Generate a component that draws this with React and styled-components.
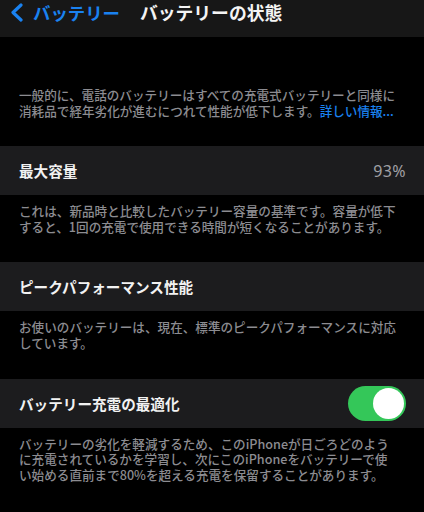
import React, { useState } from 'react';
import styled, { createGlobalStyle } from 'styled-components';

const GlobalStyle = createGlobalStyle`
    html, body {
        margin: 0;
        padding: 0;
        background: #000;
    }
    body {
        font-family: "Noto Sans CJK JP", "Noto Sans", sans-serif;
        -webkit-font-smoothing: antialiased;
    }
`;

const Page = styled.div`
    width: 424px;
    height: 512px;
    overflow: hidden;
    background: #000;
`;

const NavBar = styled.div`
    height: 37px;
    background: #171717;
    display: flex;
    align-items: flex-start;
`;

const BackButton = styled.button`
    display: flex;
    align-items: center;
    gap: 9px;
    height: 25px;
    padding: 0 0 0 10px;
    border: none;
    background: none;
    color: #1a82f0;
    font-family: inherit;
    font-size: 17.4px;
    font-weight: 700;
    cursor: pointer;
`;

const Title = styled.h1`
    margin: 0 0 0 20px;
    height: 25px;
    line-height: 25px;
    color: #f4f4f4;
    font-size: 17.8px;
    font-weight: 700;
`;

const Note = styled.div`
    padding: ${p => (p.$first ? '50px' : '8px')} 19px 28px;
    color: #8c8c91;
    font-size: 12.6px;
    font-weight: 500;
`;

const Line = styled.div`
    height: 15.6px;
    line-height: 15.6px;
    white-space: nowrap;
`;

const Link = styled.span`
    color: #1a82f0;
`;

const Row = styled.div`
    height: 49px;
    background: #1c1c1e;
    display: flex;
    align-items: center;
    justify-content: space-between;
    padding: 0 18px 0 19px;
`;

const RowLabel = styled.span`
    color: #f2f2f2;
    font-size: 14.6px;
    font-weight: 700;
`;

const RowValue = styled.span`
    color: #a0a0a5;
    font-family: "Noto Sans", sans-serif;
    font-size: 16px;
    letter-spacing: 0.4px;
`;

const Toggle = styled.button`
    width: 58px;
    height: 35px;
    border: none;
    border-radius: 18px;
    padding: 2px;
    background: ${p => (p.$on ? '#34c759' : '#39393d')};
    display: flex;
    justify-content: ${p => (p.$on ? 'flex-end' : 'flex-start')};
    cursor: pointer;
`;

const Knob = styled.span`
    width: 31px;
    height: 31px;
    border-radius: 50%;
    background: #fff;
`;

const App = () => {
    const [optimized, setOptimized] = useState(true);

    return (
        <Page>
            <GlobalStyle />
            <NavBar>
                <BackButton>
                    <svg width="14" height="19" viewBox="0 0 14 19">
                        <polyline points="11,2 3,9.5 11,17" fill="none" stroke="#1a82f0" strokeWidth="3.2" strokeLinecap="round" strokeLinejoin="round" />
                    </svg>
                    バッテリー
                </BackButton>
                <Title>バッテリーの状態</Title>
            </NavBar>

            <Note $first>
                <Line>一般的に、電話のバッテリーはすべての充電式バッテリーと同様に</Line>
                <Line>消耗品で経年劣化が進むにつれて性能が低下します。<Link>詳しい情報...</Link></Line>
            </Note>

            <Row>
                <RowLabel>最大容量</RowLabel>
                <RowValue>93%</RowValue>
            </Row>
            <Note>
                <Line>これは、新品時と比較したバッテリー容量の基準です。容量が低下</Line>
                <Line>すると、1回の充電で使用できる時間が短くなることがあります。</Line>
            </Note>

            <Row>
                <RowLabel>ピークパフォーマンス性能</RowLabel>
            </Row>
            <Note>
                <Line>お使いのバッテリーは、現在、標準のピークパフォーマンスに対応</Line>
                <Line>しています。</Line>
            </Note>

            <Row>
                <RowLabel>バッテリー充電の最適化</RowLabel>
                <Toggle $on={optimized} onClick={() => setOptimized(!optimized)}>
                    <Knob />
                </Toggle>
            </Row>
            <Note>
                <Line>バッテリーの劣化を軽減するため、このiPhoneが日ごろどのよう</Line>
                <Line>に充電されているかを学習し、次にこのiPhoneをバッテリーで使</Line>
                <Line>い始める直前まで80%を超える充電を保留することがあります。</Line>
            </Note>
        </Page>
    );
};

export default App;
